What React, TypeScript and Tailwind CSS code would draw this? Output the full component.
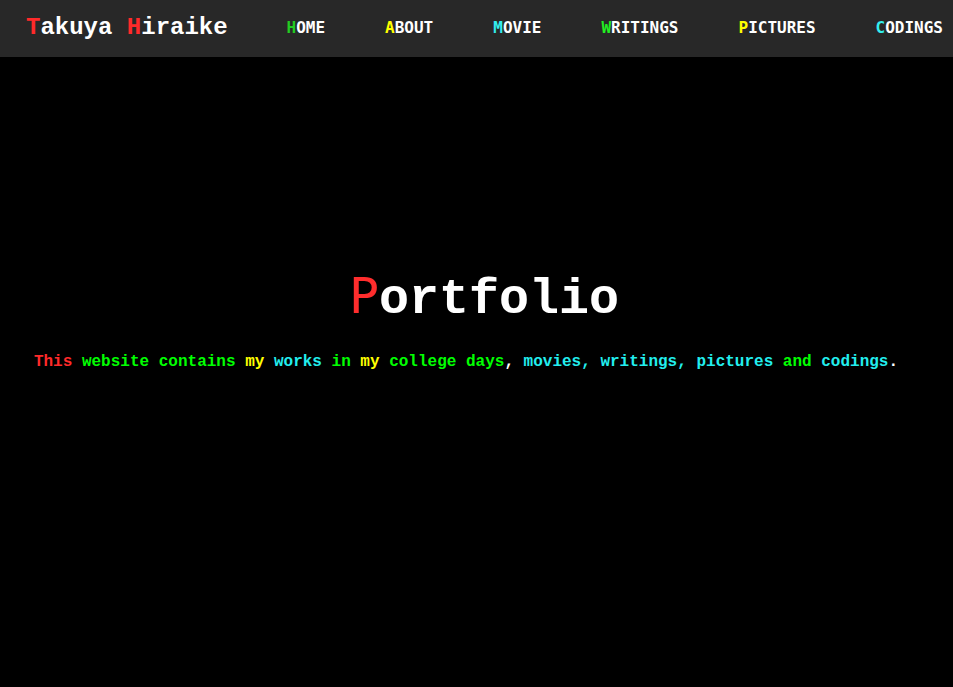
const navItems = [
  { first: "H", rest: "OME", color: "text-[#22cc22]" },
  { first: "A", rest: "BOUT", color: "text-[#ffff00]" },
  { first: "M", rest: "OVIE", color: "text-[#33eeee]" },
  { first: "W", rest: "RITINGS", color: "text-[#22ee22]" },
  { first: "P", rest: "ICTURES", color: "text-[#ffff00]" },
  { first: "C", rest: "ODINGS", color: "text-[#33eeee]" },
];

const words: { text: string; color: string }[] = [
  { text: "This", color: "text-[#ff2a2a]" },
  { text: " website contains ", color: "text-[#00ff00]" },
  { text: "my", color: "text-[#ffff00]" },
  { text: " works", color: "text-[#22eeee]" },
  { text: " in ", color: "text-[#00ff00]" },
  { text: "my", color: "text-[#ffff00]" },
  { text: " college days", color: "text-[#00ff00]" },
  { text: ", ", color: "text-white" },
  { text: "movies, writings, pictures", color: "text-[#22eeee]" },
  { text: " and ", color: "text-[#00ff00]" },
  { text: "codings", color: "text-[#22eeee]" },
  { text: ".", color: "text-white" },
];

export default function App() {
  return (
    <div className="min-h-screen bg-black text-white">
      <header className="flex h-[57px] items-center bg-[#282828] pb-[1px] pl-[26px] pr-[10px]">
        <div className="font-['Liberation_Mono',monospace] text-[24px] font-bold leading-none">
          <span className="text-[#ff2a2a]">T</span>akuya{" "}
          <span className="text-[#ff2a2a]">H</span>iraike
        </div>
        <nav className="ml-auto flex gap-[60px] font-['DejaVu_Sans_Mono',monospace] text-[16px] font-bold leading-none">
          {navItems.map((item) => (
            <a key={item.rest} href="#" className="text-white">
              <span className={item.color}>{item.first}</span>
              {item.rest}
            </a>
          ))}
        </nav>
      </header>

      <main className="pt-[207px]">
        <h1 className="pl-[15px] text-center text-[50px] leading-[60px]">
          <span className="font-['DejaVu_Sans_Mono',monospace] text-[#ff2d2d]">P</span>
          <span className="font-['Liberation_Mono',monospace] font-bold">ortfolio</span>
        </h1>
        <p className="mt-[20px] pr-[21px] text-center font-['Liberation_Mono',monospace] text-[16px] font-bold leading-6">
          {words.map((w, i) => (
            <span key={i} className={w.color}>
              {w.text}
            </span>
          ))}
        </p>
      </main>
    </div>
  );
}
